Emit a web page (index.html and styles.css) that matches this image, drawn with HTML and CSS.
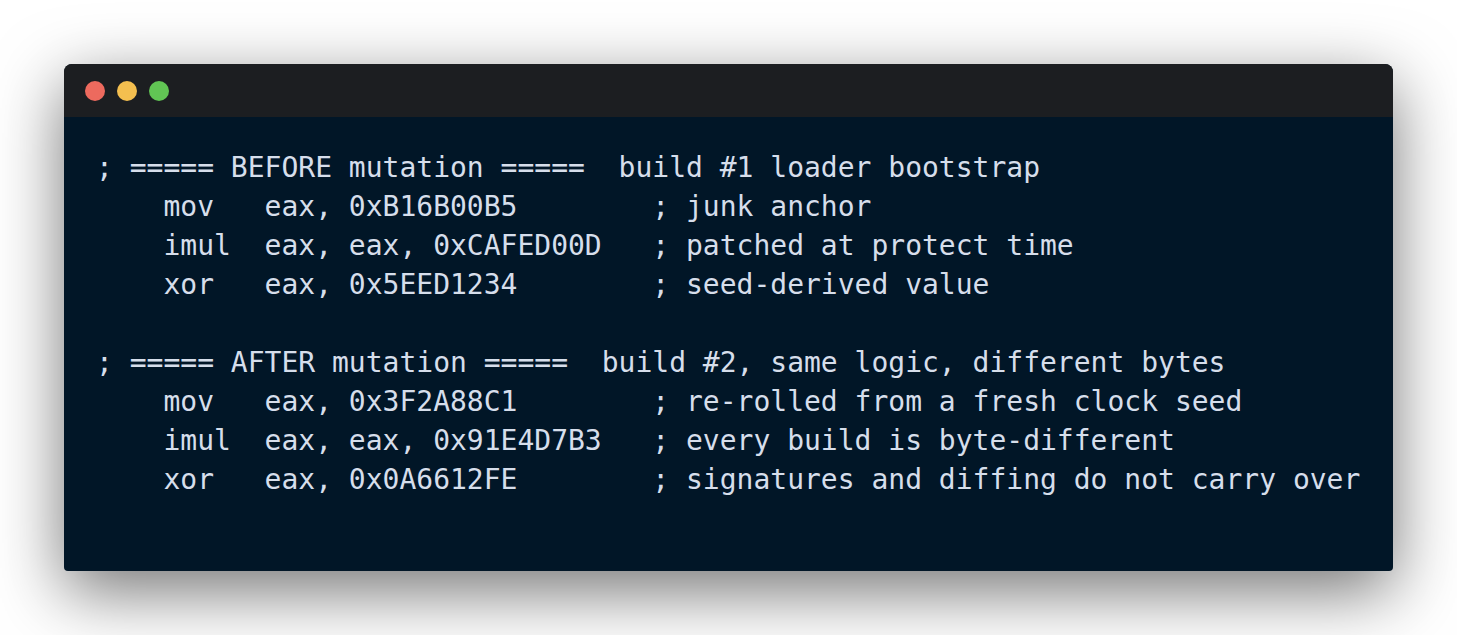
FILE: index.html
```html
<!DOCTYPE html>
<html>
<head>
<meta charset="utf-8">
<link rel="stylesheet" href="styles.css">
</head>
<body>
<div class="window">
  <div class="titlebar">
    <span class="dot red"></span>
    <span class="dot yellow"></span>
    <span class="dot green"></span>
  </div>
  <pre class="code">; ===== BEFORE mutation =====  build #1 loader bootstrap
    mov   eax, 0xB16B00B5        ; junk anchor
    imul  eax, eax, 0xCAFED00D   ; patched at protect time
    xor   eax, 0x5EED1234        ; seed-derived value

; ===== AFTER mutation =====  build #2, same logic, different bytes
    mov   eax, 0x3F2A88C1        ; re-rolled from a fresh clock seed
    imul  eax, eax, 0x91E4D7B3   ; every build is byte-different
    xor   eax, 0x0A6612FE        ; signatures and diffing do not carry over
</pre>
</div>
</body>
</html>
```
FILE: styles.css
```css
html, body {
  margin: 0;
  padding: 0;
  background: #ffffff;
}
body {
  padding: 64px;
  box-sizing: border-box;
  width: 1457px;
  height: 635px;
}
.window {
  border-radius: 8px 8px 4px 4px;
  overflow: hidden;
  background: #011627;
  box-shadow: 0 20px 68px rgba(0, 0, 0, 0.55);
}
.titlebar {
  height: 53px;
  background: #1c1e21;
  display: flex;
  align-items: center;
  gap: 12px;
  padding-left: 21px;
}
.dot {
  width: 20px;
  height: 20px;
  border-radius: 50%;
  display: block;
}
.red { background: #ed6a5e; }
.yellow { background: #f4bf4f; }
.green { background: #61c554; }
.code {
  margin: 0;
  padding: 31px 32px 72px 32px;
  font-family: "DejaVu Sans Mono", monospace;
  font-size: 28px;
  line-height: 39px;
  color: #d6deeb;
  white-space: pre;
}
```
